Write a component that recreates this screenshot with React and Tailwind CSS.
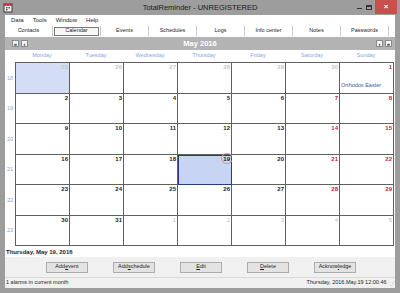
import React from "react";

// ── Data ──────────────────────────────────────────────────────────────────────
const MENU = ["Data", "Tools", "Window", "Help"];
const TABS = ["Contacts", "Calendar", "Events", "Schedules", "Logs", "Info center", "Notes", "Passwords"];
const DAYS = ["Monday", "Tuesday", "Wednesday", "Thursday", "Friday", "Saturday", "Sunday"];
const WEEKS = [18, 19, 20, 21, 22, 23];
const BUTTONS = [
  { label: "Add event", key: "e", at: 4 },
  { label: "Add schedule", key: "s", at: 4 },
  { label: "Edit", key: "E", at: 0 },
  { label: "Delete", key: "D", at: 0 },
  { label: "Acknowledge", key: "l", at: 8 },
];

function buildCells() {
  const cells = [];
  for (let i = 0; i < 42; i++) {
    const d = new Date(2016, 3, 25 + i);
    cells.push({ day: d.getDate(), month: d.getMonth(), col: i % 7, idx: i });
  }
  return cells;
}

function Underlined({ label, at }) {
  return (
    <>
      {label.slice(0, at)}
      <span className="underline">{label[at]}</span>
      {label.slice(at + 1)}
    </>
  );
}

function AppIcon() {
  return (
    <svg width="10" height="10" viewBox="0 0 10 10">
      <rect x="0.5" y="0.5" width="9" height="9" fill="#3a3a3a" />
      <rect x="1.5" y="2.5" width="7" height="6" fill="#f2f2f2" />
      <rect x="1.5" y="1" width="7" height="1.5" fill="#c83232" />
      <rect x="3" y="4" width="1.5" height="1.5" fill="#555" />
      <rect x="5.5" y="4" width="1.5" height="1.5" fill="#555" />
      <rect x="3" y="6" width="1.5" height="1.5" fill="#555" />
    </svg>
  );
}

function NavBtn({ children }) {
  return (
    <div className="w-[7px] h-[7px] bg-[#f4f4f4] border border-[#8c8c8c] flex items-center justify-center text-[6px] leading-none font-bold text-[#222]">
      {children}
    </div>
  );
}

function DayCell({ cell }) {
  const inMonth = cell.month === 4;
  const weekend = cell.col >= 5;
  const selected = inMonth && cell.day === 19;
  const firstCell = cell.idx === 0;
  let color = "text-[#1c1c1c]";
  if (!inMonth) color = cell.month === 5 ? "text-[#bdbdbd] font-normal" : "text-[#c6c6c6]";
  else if (weekend) color = "text-[#c02438]";

  return (
    <div
      className={`relative border-r border-b border-[#606060] ${
        selected ? "bg-[#c7d4f3] outline outline-1 outline-[#22407a] -outline-offset-1" : firstCell ? "bg-[#d3ddf5]" : "bg-white"
      }`}
    >
      <div className={`absolute right-[1px] top-0 text-[6px] leading-[8px] font-bold ${color}`}>{cell.day}</div>
      {selected && (
        <div className="absolute right-[-2px] top-[-2px] w-[12px] h-[11px] rounded-full border border-[#e28a8f]" />
      )}
      {inMonth && cell.day === 1 && (
        <div className="absolute left-[1px] bottom-[4px] text-[5.5px] leading-none text-[#3b57a8]">Orthodox Easter</div>
      )}
    </div>
  );
}

// ── Main ──────────────────────────────────────────────────────────────────────
export default function App() {
  const cells = buildCells();

  return (
    <div
      className="w-[400px] h-[293px] bg-[#9d9d9d] flex flex-col overflow-hidden text-[#1e1e1e]"
      style={{ fontFamily: '"Liberation Sans", Arial, sans-serif' }}
    >
      {/* Title bar */}
      <div className="h-[15px] shrink-0 relative flex items-center">
        <div className="pl-[3px] pt-[1px]">
          <AppIcon />
        </div>
        <div className="absolute inset-x-0 top-0 h-[15px] flex items-center justify-center text-[7.5px] text-[#1a1a1a] pointer-events-none">
          TotalReminder - UNREGISTERED
        </div>
        <div className="ml-auto flex items-start h-full">
          <div className="w-[8px] h-full flex items-center justify-center">
            <div className="w-[5px] h-[1px] bg-[#333] mt-[2px]" />
          </div>
          <div className="w-[12px] h-full flex items-center justify-center">
            <div className="w-[6px] h-[5px] border border-[#333] border-t-2" />
          </div>
          <div className="w-[22px] h-[14px] bg-[#c7504d] flex items-center justify-center text-white text-[8px] font-bold leading-none mr-[3px]">
            ×
          </div>
        </div>
      </div>

      {/* Client area */}
      <div className="flex-1 mx-[5px] bg-white flex flex-col min-h-0">
        {/* Menu */}
        <div className="h-[10px] shrink-0 flex items-center gap-[9px] pl-[6px] text-[6px] leading-none">
          {MENU.map((m) => (
            <span key={m}>{m}</span>
          ))}
        </div>

        {/* Tabs */}
        <div className="h-[12px] shrink-0 flex text-[5.5px] leading-none">
          {TABS.map((t, i) => (
            <div
              key={t}
              className={`w-[48px] shrink-0 flex items-center justify-center border-r border-[#c8c8c8] my-[1px] ${i === 1 ? "px-[1px]" : ""}`}
            >
              {i === 1 ? (
                <div className="w-full h-[9px] border border-[#7a7a7a] bg-[#f7f7f7] flex items-center justify-center">{t}</div>
              ) : (
                t
              )}
            </div>
          ))}
        </div>

        {/* Month header */}
        <div className="h-[13px] shrink-0 bg-[#b3b3b3] flex items-center px-[2px] relative">
          <div className="flex gap-[2px] pl-[5px]">
            <NavBtn>«</NavBtn>
            <NavBtn>‹</NavBtn>
          </div>
          <div className="absolute inset-0 flex items-center justify-center text-white font-bold text-[7.5px] leading-none">
            May 2016
          </div>
          <div className="ml-auto flex gap-[2px] pr-[1px]">
            <NavBtn>›</NavBtn>
            <NavBtn>»</NavBtn>
          </div>
        </div>

        {/* Day names */}
        <div className="h-[12px] shrink-0 pl-[10px] grid grid-cols-[repeat(7,54px)] items-center text-[5.5px] leading-none text-[#8ba2e0]">
          {DAYS.map((d) => (
            <div key={d} className="text-center">
              {d}
            </div>
          ))}
        </div>

        {/* Grid with week numbers */}
        <div className="h-[184px] shrink-0 flex">
          <div className="w-[10px] grid grid-rows-6 pt-[1px] text-[5.5px] leading-none text-[#8ba2e0]">
            {WEEKS.map((w) => (
              <div key={w} className="flex items-center pl-[2px]">
                {w}
              </div>
            ))}
          </div>
          <div className="w-[379px] h-full grid grid-cols-[repeat(7,54px)] grid-rows-6 border-l border-t border-[#606060]">
            {cells.map((c) => (
              <DayCell key={c.idx} cell={c} />
            ))}
          </div>
        </div>

        {/* Selected date */}
        <div className="h-[11px] shrink-0 flex items-center pl-[1px] text-[6px] font-bold leading-none">
          Thursday, May 19, 2016
        </div>

        {/* Buttons */}
        <div className="h-[20px] shrink-0 bg-[#f0f0f0] flex items-center gap-[25px] pl-[41px]">
          {BUTTONS.map((b) => (
            <button
              key={b.label}
              className="w-[42px] h-[11px] bg-[#e3e3e3] border border-[#adadad] text-[5.5px] leading-none flex items-center justify-center"
            >
              <Underlined label={b.label} at={b.label.indexOf(b.key)} />
            </button>
          ))}
        </div>

        {/* Status bar */}
        <div className="h-[11px] shrink-0 bg-[#f0f0f0] border-t border-[#dadada] flex items-center pl-[1px] pr-[1px] text-[5.5px] leading-none">
          <span>1 alarms in current month</span>
          <span className="ml-auto">Thursday, 2016.May.19 12:00:46</span>
          <span className="ml-[3px] text-[5px] text-[#9a9a9a] tracking-[-0.5px]">⋰</span>
        </div>
      </div>

      {/* Bottom frame */}
      <div className="h-[5px] shrink-0" />
    </div>
  );
}
